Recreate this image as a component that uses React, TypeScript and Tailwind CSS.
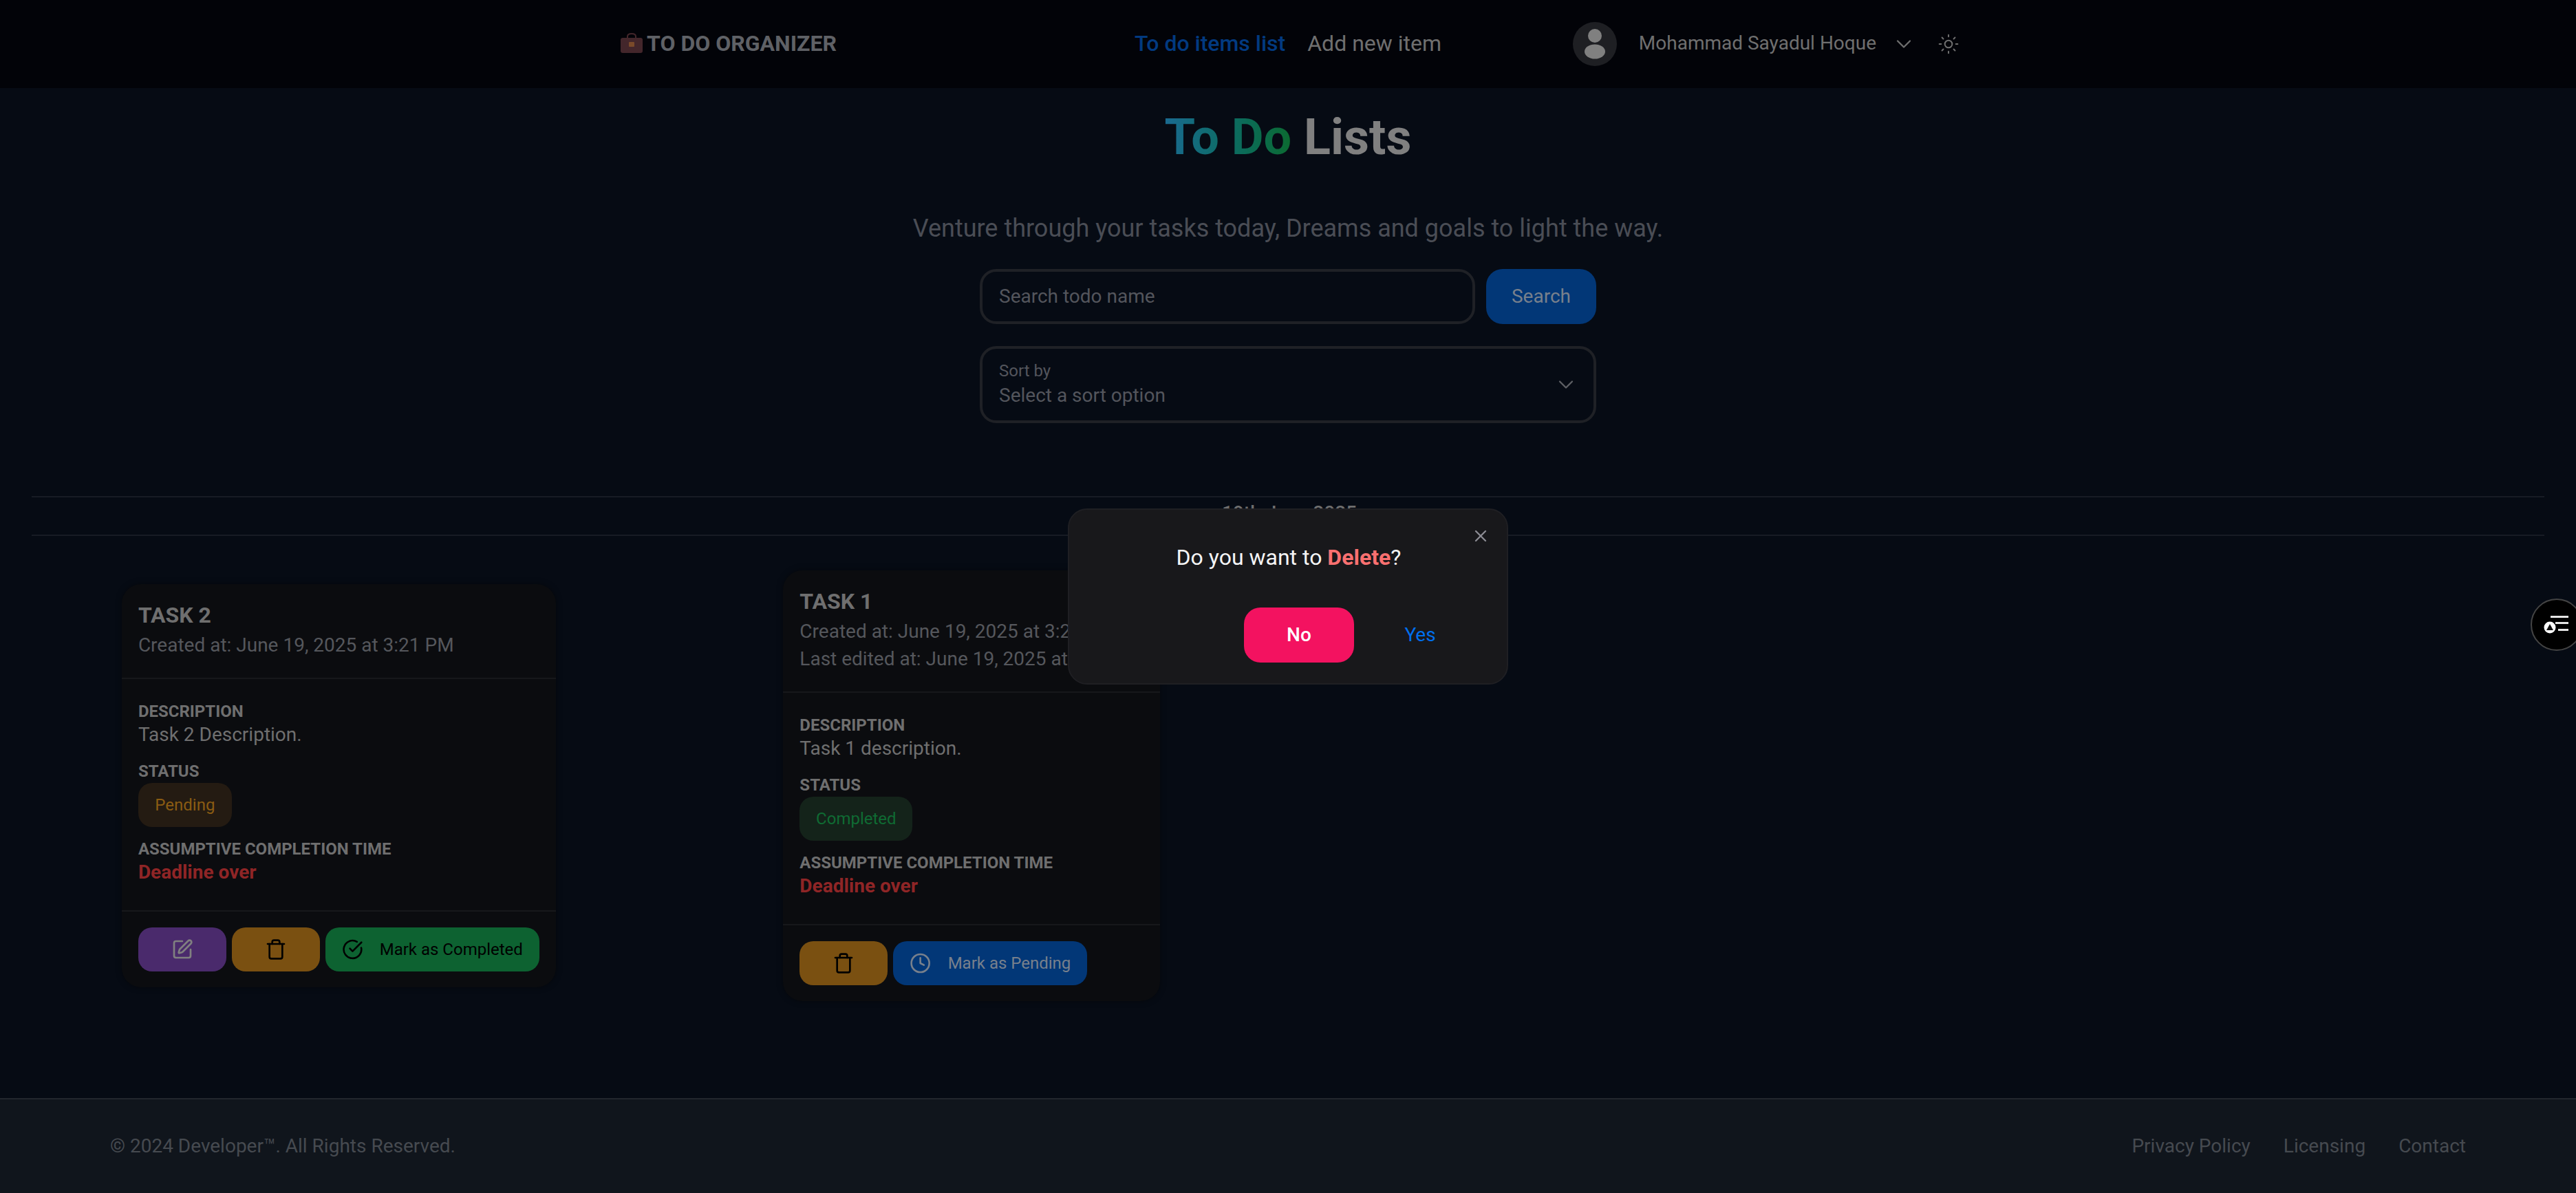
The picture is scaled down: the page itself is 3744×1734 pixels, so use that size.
import React from 'react'
import {
  ChevronDown,
  CircleCheckBig,
  Clock,
  SquarePen,
  Sun,
  Trash,
  X,
} from 'lucide-react'

const Briefcase = () => (
  <svg width="34" height="30" viewBox="0 0 34 30" className="ml-[5px] shrink-0">
    <path
      d="M11 8V5c0-2 2-4 6-4s6 2 6 4v3"
      fill="none"
      stroke="#43262b"
      strokeWidth="2"
    />
    <rect x="1" y="7" width="32" height="22" rx="3" fill="#43262b" />
    <rect x="13" y="13" width="8" height="7" rx="1" fill="#7a4a2a" />
  </svg>
)

const Avatar = () => (
  <div className="flex h-16 w-16 shrink-0 items-center justify-center rounded-full bg-[#1e1f23]">
    <svg width="32" height="44" viewBox="0 0 32 44">
      <ellipse cx="16" cy="10" rx="10" ry="10" fill="#808080" />
      <ellipse cx="16" cy="33" rx="15" ry="10.5" fill="#808080" />
    </svg>
  </div>
)

const Navbar = () => (
  <nav className="h-32 shrink-0 bg-[#020308]">
    <div className="mx-auto flex h-full w-[2048px] items-center px-12">
      <div className="flex flex-1 basis-0 items-center gap-[5px] pb-[2px] text-[32px] font-bold text-[#5f6166]">
        <Briefcase />
        <span>TO DO ORGANIZER</span>
      </div>
      <div className="flex items-center gap-8 pb-[2px] text-[32px]">
        <span className="font-medium text-[#023a80]">To do items list</span>
        <span className="text-[#6f6f6f]">Add new item</span>
      </div>
      <div className="flex flex-1 basis-0 items-center justify-end">
        <Avatar />
        <span className="ml-8 pb-[2px] text-[28px] text-[#6f6f6f]">
          Mohammad Sayadul Hoque
        </span>
        <ChevronDown size={36} strokeWidth={1.5} className="ml-[22px] text-[#6f6f6f]" />
        <Sun size={32} strokeWidth={1.5} className="ml-[31px] text-[#6f6f6f]" />
      </div>
    </div>
  </nav>
)

const SearchArea = () => (
  <div className="flex flex-col items-center">
    <h1 className="mt-[24px] text-[72px] leading-[96px] font-bold text-[#808080]">
      <span className="bg-gradient-to-r from-[#1a6a90] to-[#0c6a30] bg-clip-text text-transparent">
        To Do
      </span>{' '}
      Lists
    </h1>
    <p className="mt-[57px] text-[36px] leading-[54px] text-[#4a4d55]">
      Venture through your tasks today, Dreams and goals to light the way.
    </p>
    <div className="mt-[32px] flex w-[896px] flex-col gap-8">
      <div className="flex gap-4">
        <div className="flex h-20 flex-1 items-center rounded-3xl border-4 border-[#1f2126] px-[24px] text-[28px] text-[#53555c]">
          Search todo name
        </div>
        <div className="flex h-20 w-40 items-center justify-center rounded-3xl bg-[#023777] text-[28px] text-[#78808c]">
          Search
        </div>
      </div>
      <div className="flex h-28 items-center justify-between rounded-3xl border-4 border-[#1f2126] pr-[22px] pl-[24px]">
        <div className="flex flex-col">
          <span className="text-[24px] leading-[32px] text-[#53555c]">Sort by</span>
          <span className="text-[28px] leading-[40px] text-[#53555c]">
            Select a sort option
          </span>
        </div>
        <ChevronDown size={36} strokeWidth={1.5} className="text-[#5f6166]" />
      </div>
    </div>
  </div>
)

const Field = ({ label, children }: { label: string; children: React.ReactNode }) => (
  <div>
    <div className="text-[24px] leading-[32px] font-bold text-[#6f6f6f]">{label}</div>
    {children}
  </div>
)

type CardProps = {
  title: string
  lines: string[]
  description: string
  status: React.ReactNode
  actions: React.ReactNode
}

const TaskCard = ({ title, lines, description, status, actions }: CardProps) => (
  <div className="w-fit rounded-[28px] bg-[#0b0c0f] shadow-[0_0_10px_rgba(0,0,0,0.4)]">
    <div className="border-b-2 border-[#17181b] px-6 pt-6 pb-[27px]">
      <h2 className="mb-[3px] text-[32px] leading-[42px] font-bold text-[#6f6f6f]">{title}</h2>
      {lines.map((line) => (
        <p key={line} className="text-[28px] leading-[40px] whitespace-nowrap text-[#55575c]">
          {line}
        </p>
      ))}
    </div>
    <div className="flex flex-col gap-4 border-b-2 border-[#17181b] px-6 pt-[31px] pb-[37px]">
      <Field label="DESCRIPTION">
        <p className="pb-[3px] text-[28px] leading-[36px] text-[#6f6f6f]">{description}</p>
      </Field>
      <Field label="STATUS">{status}</Field>
      <Field label="ASSUMPTIVE COMPLETION TIME">
        <p className="text-[28px] leading-[36px] font-bold text-[#8f2526]">Deadline over</p>
      </Field>
    </div>
    <div className="flex gap-2 px-6 py-[23px]">{actions}</div>
  </div>
)

const IconButton = ({ className, children }: { className: string; children: React.ReactNode }) => (
  <div className={`flex h-16 w-32 items-center justify-center rounded-[20px] ${className}`}>
    {children}
  </div>
)

const Page = () => (
  <main className="flex-1">
    <SearchArea />
    <div className="mx-[46px] mt-[106px]">
      <div className="flex h-[58px] items-center justify-center border-y-2 border-[#171b24] pb-[8px] pl-[4px] text-[28px] font-medium text-[#6f6f6f]">
        19th June 2025
      </div>
      <div className="grid grid-cols-4 items-center justify-items-center gap-[27px] pt-[50px]">
        <TaskCard
          title="TASK 2"
          lines={['Created at: June 19, 2025 at 3:21 PM']}
          description="Task 2 Description."
          status={
            <div className="mt-px flex h-16 w-[136px] items-center justify-center rounded-[20px] bg-[#241b12] text-[24px] text-[#8a5c12]">
              Pending
            </div>
          }
          actions={
            <>
              <IconButton className="bg-[#4a2a6c] text-[#808080]">
                <SquarePen size={32} strokeWidth={2} />
              </IconButton>
              <IconButton className="bg-[#7a5011] text-black">
                <Trash size={32} strokeWidth={2} />
              </IconButton>
              <div className="flex h-16 w-[311px] items-center gap-6 rounded-[20px] bg-[#0d6231] px-6 text-[24px] whitespace-nowrap text-black">
                <CircleCheckBig size={32} strokeWidth={2} />
                Mark as Completed
              </div>
            </>
          }
        />
        <TaskCard
          title="TASK 1"
          lines={[
            'Created at: June 19, 2025 at 3:21 PM',
            'Last edited at: June 19, 2025 at 3:22 PM',
          ]}
          description="Task 1 description."
          status={
            <div className="mt-px flex h-16 w-[164px] items-center justify-center rounded-[20px] bg-[#14231a] text-[24px] text-[#0f6b33]">
              Completed
            </div>
          }
          actions={
            <>
              <IconButton className="bg-[#7a5011] text-black">
                <Trash size={32} strokeWidth={2} />
              </IconButton>
              <div className="flex h-16 w-[282px] items-center gap-6 rounded-[20px] bg-[#023777] px-6 text-[24px] whitespace-nowrap text-[#78808c]">
                <Clock size={32} strokeWidth={2} />
                Mark as Pending
              </div>
            </>
          }
        />
      </div>
    </div>
  </main>
)

const Footer = () => (
  <footer className="flex h-[138px] shrink-0 items-center justify-between border-t-2 border-[#22262d] bg-[#10151c] px-[160px] text-[28px] text-[#464a50]">
    <span>© 2024 Developer™. All Rights Reserved.</span>
    <div className="flex gap-12">
      <span>Privacy Policy</span>
      <span>Licensing</span>
      <span>Contact</span>
    </div>
  </footer>
)

const DeleteModal = () => (
  <div className="absolute inset-0 flex items-center justify-center">
    <div className="relative w-[640px] rounded-[28px] border-2 border-[#1f1f23] bg-[#18181b] pt-[42px] pr-[46px] pb-[30px] pl-12">
      <X size={28} strokeWidth={2} className="absolute top-[24px] right-[24px] text-[#8c8c94]" />
      <p className="text-center text-[32px] leading-[54px] font-normal text-[#f4f4f5]">
        Do you want to <span className="font-bold text-[#f97070]">Delete</span>?
      </p>
      <div className="mt-[46px] flex justify-end gap-4">
        <div className="flex h-20 w-40 items-center justify-center rounded-3xl bg-[#f31260] text-[28px] font-medium text-white">
          No
        </div>
        <div className="flex h-20 w-40 items-center justify-center text-[28px] text-[#006fee]">
          Yes
        </div>
      </div>
    </div>
  </div>
)

const FloatingToggle = () => (
  <div className="absolute top-[870px] right-[-10px] flex h-[76px] w-[76px] items-center justify-center rounded-full border-2 border-[#444] bg-black">
    <svg width="44" height="40" viewBox="0 0 44 40">
      <rect x="13" y="7" width="26" height="3" fill="#e5e5e5" />
      <rect x="20" y="16" width="19" height="3" fill="#e5e5e5" />
      <rect x="24" y="26" width="15" height="3" fill="#e5e5e5" />
      <circle cx="12" cy="24" r="8.5" fill="#fff" />
      <path d="M12 19l5 9H7z" fill="#111" />
    </svg>
  </div>
)

const App = () => (
  <div className="relative flex min-h-screen flex-col overflow-hidden bg-[#060b14] font-[Roboto,sans-serif]">
    <Navbar />
    <Page />
    <Footer />
    <DeleteModal />
    <FloatingToggle />
  </div>
)

export default App
